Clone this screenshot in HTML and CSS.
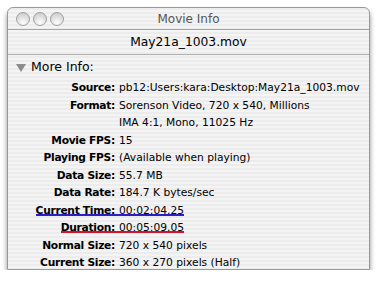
FILE: index.html
```html
<!DOCTYPE html>
<html lang="en">
<head>
    <meta charset="UTF-8">
    <title>Movie Info</title>
    <link rel="stylesheet" href="styles.css">
</head>
<body>
    <div class="window">
        <div class="titlebar">
            <div class="lights">
                <span class="light"></span>
                <span class="light"></span>
                <span class="light"></span>
            </div>
            <div class="title">Movie Info</div>
        </div>

        <div class="filename">May21a_1003.mov</div>

        <div class="section">
            <div class="disclosure"><span class="triangle"></span>More Info:</div>

            <div class="info">
                <div class="key"><span>Source:</span></div>
                <div class="val">pb12:Users:kara:Desktop:May21a_1003.mov</div>

                <div class="key"><span>Format:</span></div>
                <div class="val">Sorenson Video, 720 x 540, Millions<br>IMA 4:1, Mono, 11025 Hz</div>

                <div class="key"><span>Movie FPS:</span></div>
                <div class="val">15</div>

                <div class="key"><span>Playing FPS:</span></div>
                <div class="val">(Available when playing)</div>

                <div class="key"><span>Data Size:</span></div>
                <div class="val">55.7 MB</div>

                <div class="key"><span>Data Rate:</span></div>
                <div class="val">184.7 K bytes/sec</div>

                <!-- marked rows -->
                <div class="key"><span class="mark mark-blue">Current Time:</span></div>
                <div class="val"><span class="mark mark-blue">00:02:04.25</span></div>

                <div class="key"><span class="mark mark-red">Duration:</span></div>
                <div class="val"><span class="mark mark-red">00:05:09.05</span></div>

                <div class="key"><span>Normal Size:</span></div>
                <div class="val">720 x 540 pixels</div>

                <div class="key"><span>Current Size:</span></div>
                <div class="val">360 x 270 pixels (Half)</div>
            </div>
        </div>
    </div>
</body>
</html>
```

FILE: styles.css
```css
body {
    margin: 0;
    background: #fff;
    font-family: "DejaVu Sans", "Liberation Sans", sans-serif;
    color: #000;
}
.window {
    margin: 7px 0 0 7px;
    width: 361px;
    height: 261px;
    border: 1px solid #999;
    border-radius: 6px 6px 0 0;
    background: repeating-linear-gradient(#ececec 0 2px, #f4f4f4 2px 4px);
    box-shadow: 0 4px 5px rgba(0, 0, 0, 0.45);
    overflow: hidden;
}
.titlebar {
    height: 21px;
    display: grid;
    grid-template-columns: 1fr auto 1fr;
    align-items: center;
    border-bottom: 1px solid #a4a4a4;
}
.lights {
    display: flex;
    gap: 3px;
    padding-left: 8px;
}
.light {
    width: 12px;
    height: 12px;
    border-radius: 50%;
    border: 1px solid #a0a0a0;
    background: radial-gradient(circle at 50% 80%, #fdfdfd 0, #e4e4e4 45%, #c4c4c4 100%);
}
.title {
    font-size: 12px;
    color: #555;
}
.filename {
    height: 24px;
    line-height: 24px;
    text-align: center;
    font-size: 12.3px;
    border-bottom: 1px solid #b0b0b0;
}
.disclosure {
    display: flex;
    align-items: center;
    gap: 5px;
    margin: 4px 0 0 8px;
    font-size: 12.5px;
    line-height: 16px;
}
.triangle {
    width: 0;
    height: 0;
    border-left: 5px solid transparent;
    border-right: 5px solid transparent;
    border-top: 8px solid #8c8c8c;
    margin-top: 2px;
}
.info {
    display: grid;
    grid-template-columns: 111px auto;
    margin-top: 4px;
    font-size: 10.7px;
    line-height: 17.5px;
}
.key {
    text-align: right;
    font-weight: bold;
    letter-spacing: -0.3px;
}
.key span {
    padding-right: 4px;
}
.mark {
    background-repeat: no-repeat;
    background-size: 100% 2px;
    background-position: 0 calc(100% - 1px);
}
.mark-blue {
    background-image: linear-gradient(#2a20c8, #2a20c8);
}
.mark-red {
    background-image: linear-gradient(#d3122c, #d3122c);
}
```
